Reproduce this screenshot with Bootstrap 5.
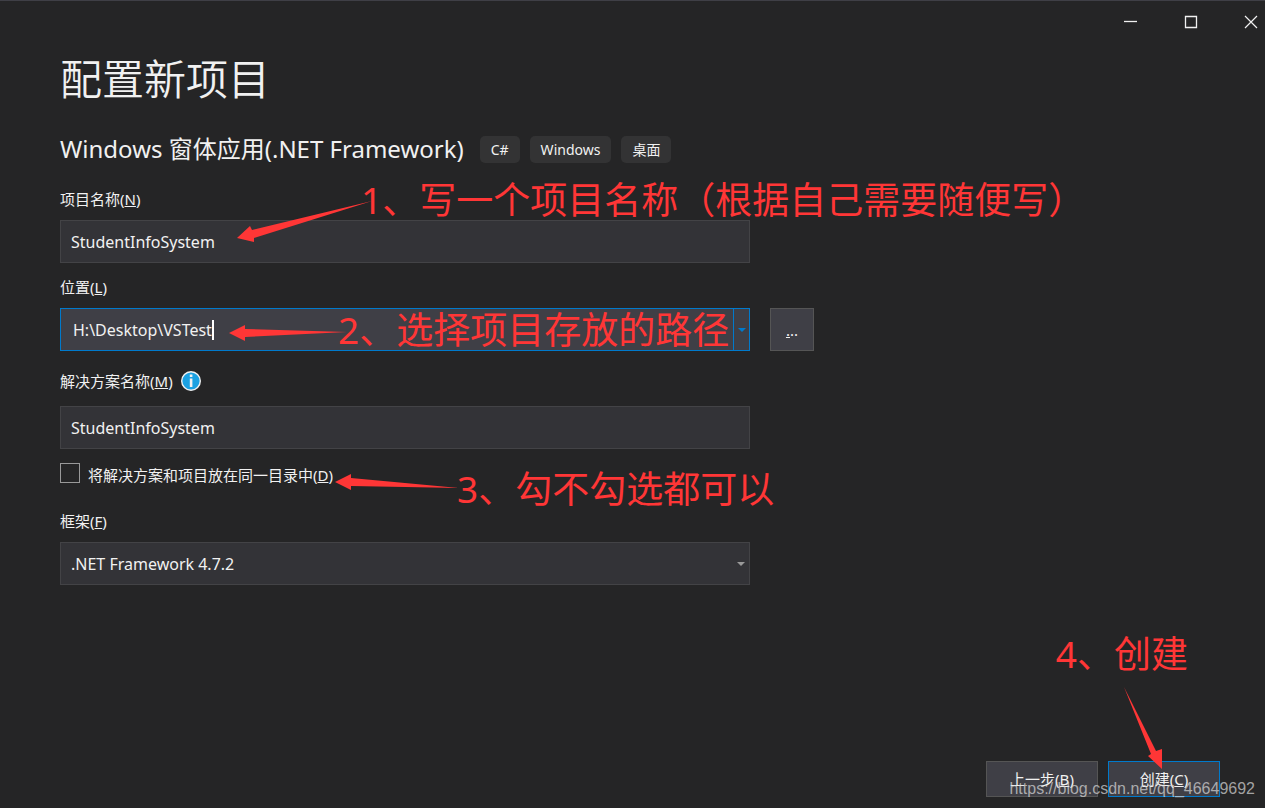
<!DOCTYPE html>
<html lang="zh-CN">
<head>
<meta charset="utf-8">
<meta name="viewport" content="width=device-width, initial-scale=1">
<title>配置新项目</title>
<link href="https://cdn.jsdelivr.net/npm/bootstrap@5.3.0/dist/css/bootstrap.min.css" rel="stylesheet">
<style>
  body { background: #252526; color: #f1f1f1; font-family: "Noto Sans", "Noto Sans CJK SC", sans-serif; font-size: 15px; line-height: 20px; }
  .vs-window { border-top: 1px solid #3f3f46; padding: 0 45px 11px 60px; }
  .caption-bar { height: 38px; margin-right: -45px; }
  .caption-btn { width: 60px; height: 38px; border: 0; background: none; color: #f1f1f1; padding: 0; }
  .caption-btn.close-window { width: 44px; padding-left: 16px; }
  .page-title { font-size: 42px; line-height: 56px; font-weight: 350; margin: 10px 0 26px; font-family: "Noto Sans CJK SC", sans-serif; }
  .template-row { gap: 16px; height: 36px; margin-bottom: 22px; }
  .template-name { font-size: 24px; line-height: 36px; font-weight: 400; }
  .tag-list { gap: 10px; }
  .tag-chip { background: #333334; border-radius: 5px; padding: 3px 11px; font-size: 14px; line-height: 21px; }
  .field-col { max-width: 690px; }
  .field-group { margin-bottom: 14px; }
  .vs-label { display: block; margin-bottom: 11px; }
  .path-row { gap: 20px; }
  .solution-group { padding-top: 6px; }
  .solution-label { margin-bottom: 15px; }
  .check-group { margin-bottom: 26px; }
  .check-group label { padding-top: 2px; }
  .vs-box, .vs-box:focus { height: 43px; border: 1px solid #434346; border-radius: 0; background: #333337; color: #f1f1f1; font-size: 16px; padding: 0 10px; box-shadow: none; }
  .vs-combo { border: 1px solid #007acc; background: #3f3f46; }
  .vs-combo .vs-box { height: 41px; border: 0; background: none; padding-left: 12px; }
  .combo-arrow { width: 16px; border: 0; border-left: 1px solid #007acc; background: none; padding: 0; color: #007acc; }
  .text-caret { left: 151px; top: 11px; width: 2px; height: 20px; background: #fff; }
  .select-arrow { right: 5px; top: 20px; color: #999; }
  .vs-btn { height: 36px; width: 112px; border: 1px solid #555555; background: #3f3f46; color: #f1f1f1; padding: 0; font-size: 15px; }
  .vs-btn.primary-action { border-color: #007acc; }
  .vs-btn.browse { width: 44px; height: 43px; }
  .action-bar { gap: 10px; }
  .vs-check { appearance: none; width: 20px; height: 20px; border: 1px solid #999; background: #252526; margin: 0; }
  .note { color: #ff3636; fill: #ff3636; font-size: 37px; line-height: 44px; white-space: nowrap; pointer-events: none; z-index: 5; }
  .note svg { position: absolute; overflow: visible; }
  .note-name { left: 301px; top: -11px; }
  .note-path { left: 278px; top: 31px; }
  .note-check { left: 397px; top: 4px; }
  .note-create { right: 32px; bottom: 121px; }
  .watermark { right: 10px; bottom: 9px; font: 16px/20px "Liberation Sans", sans-serif; color: rgba(220,220,220,.7); z-index: 6; pointer-events: none; }
</style>
</head>
<body>
<div class="vs-window min-vh-100 d-flex flex-column position-relative">
  <header class="caption-bar d-flex justify-content-end">
    <button class="caption-btn" aria-label="最小化"><svg width="14" height="14" viewBox="0 0 14 14"><path d="M0 6.5h13" stroke="currentColor" stroke-width="1.3"/></svg></button>
    <button class="caption-btn" aria-label="最大化"><svg width="14" height="14" viewBox="0 0 14 14"><path d="M1.5 1.5h11v11h-11z" fill="none" stroke="currentColor" stroke-width="1.3"/></svg></button>
    <button class="caption-btn close-window" aria-label="关闭"><svg width="14" height="14" viewBox="0 0 14 14"><path d="M1 1l12 12M13 1L1 13" stroke="currentColor" stroke-width="1.2"/></svg></button>
  </header>

  <main class="flex-grow-1">
    <h1 class="page-title">配置新项目</h1>
    <div class="template-row d-flex align-items-center">
      <h2 class="template-name mb-0">Windows 窗体应用(.NET Framework)</h2>
      <div class="tag-list d-flex">
        <span class="tag-chip">C#</span><span class="tag-chip">Windows</span><span class="tag-chip">桌面</span>
      </div>
    </div>

    <form>
      <div class="field-col field-group position-relative">
        <label class="vs-label" for="projectName">项目名称(<u>N</u>)</label>
        <input class="form-control vs-box" id="projectName" value="StudentInfoSystem" spellcheck="false">
        <div class="note note-name position-absolute">1、写一个项目名称（根据自己需要随便写）
          <svg width="135" height="40" style="left:-124px;top:23px" viewBox="0 0 135 40"><path d="M0 37 13 25 15 29 135 0 17 37 17 41z"/></svg>
        </div>
      </div>

      <div class="field-group position-relative">
        <label class="vs-label" for="location">位置(<u>L</u>)</label>
        <div class="path-row d-flex">
          <div class="field-col vs-combo d-flex flex-grow-1 position-relative">
            <input class="form-control vs-box" id="location" value="H:\Desktop\VSTest" spellcheck="false">
            <span class="text-caret position-absolute"></span>
            <button type="button" class="combo-arrow" aria-label="最近的位置"><svg class="d-block mx-auto" width="8" height="4" viewBox="0 0 8 4"><path d="M0 0h8L4 4z" fill="currentColor"/></svg></button>
          </div>
          <button type="button" class="vs-btn browse"><u>.</u>..</button>
        </div>
        <div class="note note-path position-absolute">2、选择项目存放的路径
          <svg width="118" height="16" style="left:-109px;top:17px" viewBox="0 0 118 16"><path d="M0 8 16 0V4L118 7 16 12V16z"/></svg>
        </div>
      </div>

      <div class="field-col field-group solution-group">
        <div class="solution-label d-flex align-items-center gap-2">
          <label for="solutionName">解决方案名称(<u>M</u>)</label>
          <svg width="20" height="20" viewBox="0 0 20 20"><circle cx="10" cy="10" r="9.3" fill="#1ba1e2" stroke="#f1f1f1" stroke-width="1.4"/><path d="M8.8 3.5h2.6v2.5H8.8zM8.8 7.5h2.6v8.5H8.8z" fill="#f1f1f1"/></svg>
        </div>
        <input class="form-control vs-box" id="solutionName" value="StudentInfoSystem" spellcheck="false">
      </div>

      <div class="field-col check-group position-relative d-flex gap-2">
        <input type="checkbox" class="vs-check flex-shrink-0" id="sameDir">
        <label for="sameDir">将解决方案和项目放在同一目录中(<u>D</u>)</label>
        <div class="note note-check position-absolute">3、勾不勾选都可以
          <svg width="124" height="17" style="left:-122px;top:7px" viewBox="0 0 124 17"><path d="M0 8 16 0V4L124 14 16 12V16z"/></svg>
        </div>
      </div>

      <div class="field-col">
        <label class="vs-label" for="framework">框架(<u>F</u>)</label>
        <div class="position-relative">
          <select class="form-select vs-box" id="framework"><option>.NET Framework 4.7.2</option></select>
          <svg class="select-arrow position-absolute" width="8" height="4" viewBox="0 0 8 4"><path d="M0 0h8L4 4z" fill="currentColor"/></svg>
        </div>
      </div>
    </form>
  </main>

  <footer class="action-bar d-flex justify-content-end position-relative">
    <button class="vs-btn">上一步(<u>B</u>)</button>
    <button class="vs-btn primary-action">创建(<u>C</u>)</button>
    <div class="note note-create position-absolute">4、创建
      <svg width="40" height="82" style="left:68px;top:55px" viewBox="0 0 40 82"><path d="M0 0 32 64 38 62 38 82 24 69 27 67z"/></svg>
    </div>
  </footer>
  <div class="watermark position-absolute">https://blog.csdn.net/qq_46649692</div>
</div>
<script src="https://cdn.jsdelivr.net/npm/bootstrap@5.3.0/dist/js/bootstrap.bundle.min.js"></script>
</body>
</html>
